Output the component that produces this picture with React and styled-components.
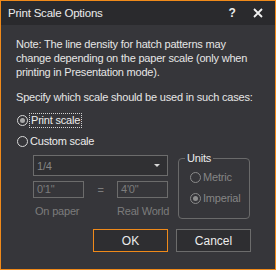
import styled, { createGlobalStyle } from 'styled-components';

const Global = createGlobalStyle`
  html, body { margin: 0; padding: 0; background: #36363a; }
  * { box-sizing: border-box; }
`;

const Window = styled.div`
  width: 276px;
  height: 270px;
  border: 1px solid #f08a1a;
  background: #36363a;
  font-family: "Liberation Sans", Arial, sans-serif;
  font-size: 11px;
  letter-spacing: -0.2px;
  color: #e6e6e6;
  display: flex;
  flex-direction: column;
  overflow: hidden;
`;

const TitleBar = styled.div`
  flex-shrink: 0;
  height: 24px;
  background: #2a2a2d;
  display: flex;
  align-items: center;
  padding: 0 4px 0 7px;
  font-size: 11.5px;
  color: #ececec;
`;

const Title = styled.span`
  flex: 1;
`;

const TitleButton = styled.span`
  width: 26px;
  display: flex;
  justify-content: center;
  font-weight: bold;
  font-size: 12px;
`;

const Body = styled.div`
  padding: 12px 8px 0 15px;
  display: flex;
  flex-direction: column;
`;

const Note = styled.p`
  margin: 0;
  width: 240px;
  line-height: 14px;
`;

const Prompt = styled.p`
  margin: 11px 0 7px;
  line-height: 14px;
  white-space: nowrap;
`;

const RadioRow = styled.label`
  display: flex;
  align-items: center;
  height: 18px;
  margin-bottom: ${p => p.$gap || 0}px;
  color: ${p => (p.$disabled ? '#858585' : '#ececec')};
`;

const Circle = styled.span`
  width: 11px;
  height: 11px;
  border-radius: 50%;
  border: 1px solid ${p => (p.$disabled ? '#8a8a8a' : '#d8d8d8')};
  margin: 0 2px 0 1px;
  display: flex;
  align-items: center;
  justify-content: center;
  &::after {
    content: '';
    display: ${p => (p.$checked ? 'block' : 'none')};
    width: 5px;
    height: 5px;
    border-radius: 50%;
    background: ${p => (p.$disabled ? '#8e8e8e' : '#a8a8a8')};
  }
`;

const Focus = styled.span`
  outline: 1px dotted #d0d0d0;
  padding: 0 1px;
  line-height: 13px;
`;

const Options = styled.div`
  display: flex;
  gap: 10px;
  padding-left: 17px;
  margin-top: 5px;
`;

const LeftCol = styled.div`
  width: 135px;
  display: flex;
  flex-direction: column;
`;

const Select = styled.div`
  height: 21px;
  border: 1px solid #6c6c6c;
  background: #303033;
  display: flex;
  align-items: center;
  justify-content: space-between;
  padding: 0 7px 0 3px;
  color: #858585;
`;

const Caret = styled.span`
  width: 0;
  height: 0;
  border-left: 3px solid transparent;
  border-right: 3px solid transparent;
  border-top: 3px solid #d8d8d8;
`;

const Row = styled.div`
  display: grid;
  grid-template-columns: 51px 1fr 51px;
  align-items: center;
  margin-top: ${p => p.$top}px;
`;

const Field = styled.div`
  height: 17px;
  border: 1px solid #6c6c6c;
  padding: 0 3px;
  line-height: 15px;
  color: #7c7c7c;
`;

const Equals = styled.span`
  text-align: center;
  color: #7c7c7c;
`;

const Caption = styled.span`
  color: #7c7c7c;
  line-height: 14px;
  white-space: nowrap;
  padding-left: ${p => p.$indent || 0}px;
`;

const Group = styled.fieldset`
  width: 72px;
  height: 67px;
  margin: -3px 0 0;
  border: 1px solid #6a6a6a;
  border-radius: 4px;
  padding: 4px 0 0 10px;
`;

const Legend = styled.legend`
  padding: 0 2px;
  margin-left: -4px;
  color: #ececec;
  line-height: 12px;
`;

const GroupList = styled.div`
  display: flex;
  flex-direction: column;
  gap: 3px;
`;

const Buttons = styled.div`
  display: flex;
  justify-content: flex-end;
  gap: 8px;
  padding-right: 16px;
  margin-top: 10px;
`;

const Button = styled.button`
  width: 75px;
  height: 23px;
  background: #2e2e31;
  border: 1px solid ${p => (p.$primary ? '#f08a1a' : '#6c6c6c')};
  color: #ececec;
  font-family: "Liberation Sans", Arial, sans-serif;
  font-size: 12px;
  padding: 0;
`;

export default function App() {
  return (
    <>
      <Global />
      <Window>
        <TitleBar>
          <Title>Print Scale Options</Title>
          <TitleButton>?</TitleButton>
          <TitleButton>
            <svg width="10" height="10" viewBox="0 0 10 10">
              <path d="M1 1L9 9M9 1L1 9" stroke="#f2f2f2" strokeWidth="1.8" />
            </svg>
          </TitleButton>
        </TitleBar>
        <Body>
          <Note>
            Note: The line density for hatch patterns may change depending on the paper scale (only when printing in Presentation mode).
          </Note>
          <Prompt>Specify which scale should be used in such cases:</Prompt>
          <RadioRow $gap={3}>
            <Circle $checked />
            <Focus>Print scale</Focus>
          </RadioRow>
          <RadioRow>
            <Circle />
            Custom scale
          </RadioRow>
          <Options>
            <LeftCol>
              <Select>
                1/4
                <Caret />
              </Select>
              <Row $top={5}>
                <Field>0'1"</Field>
                <Equals>=</Equals>
                <Field>4'0"</Field>
              </Row>
              <Row $top={6}>
                <Caption $indent={2}>On paper</Caption>
                <span />
                <Caption>Real World</Caption>
              </Row>
            </LeftCol>
            <Group>
              <Legend>Units</Legend>
              <GroupList>
                <RadioRow $disabled>
                  <Circle $disabled />
                  Metric
                </RadioRow>
                <RadioRow $disabled>
                  <Circle $disabled $checked />
                  Imperial
                </RadioRow>
              </GroupList>
            </Group>
          </Options>
          <Buttons>
            <Button $primary>OK</Button>
            <Button>Cancel</Button>
          </Buttons>
        </Body>
      </Window>
    </>
  );
}
